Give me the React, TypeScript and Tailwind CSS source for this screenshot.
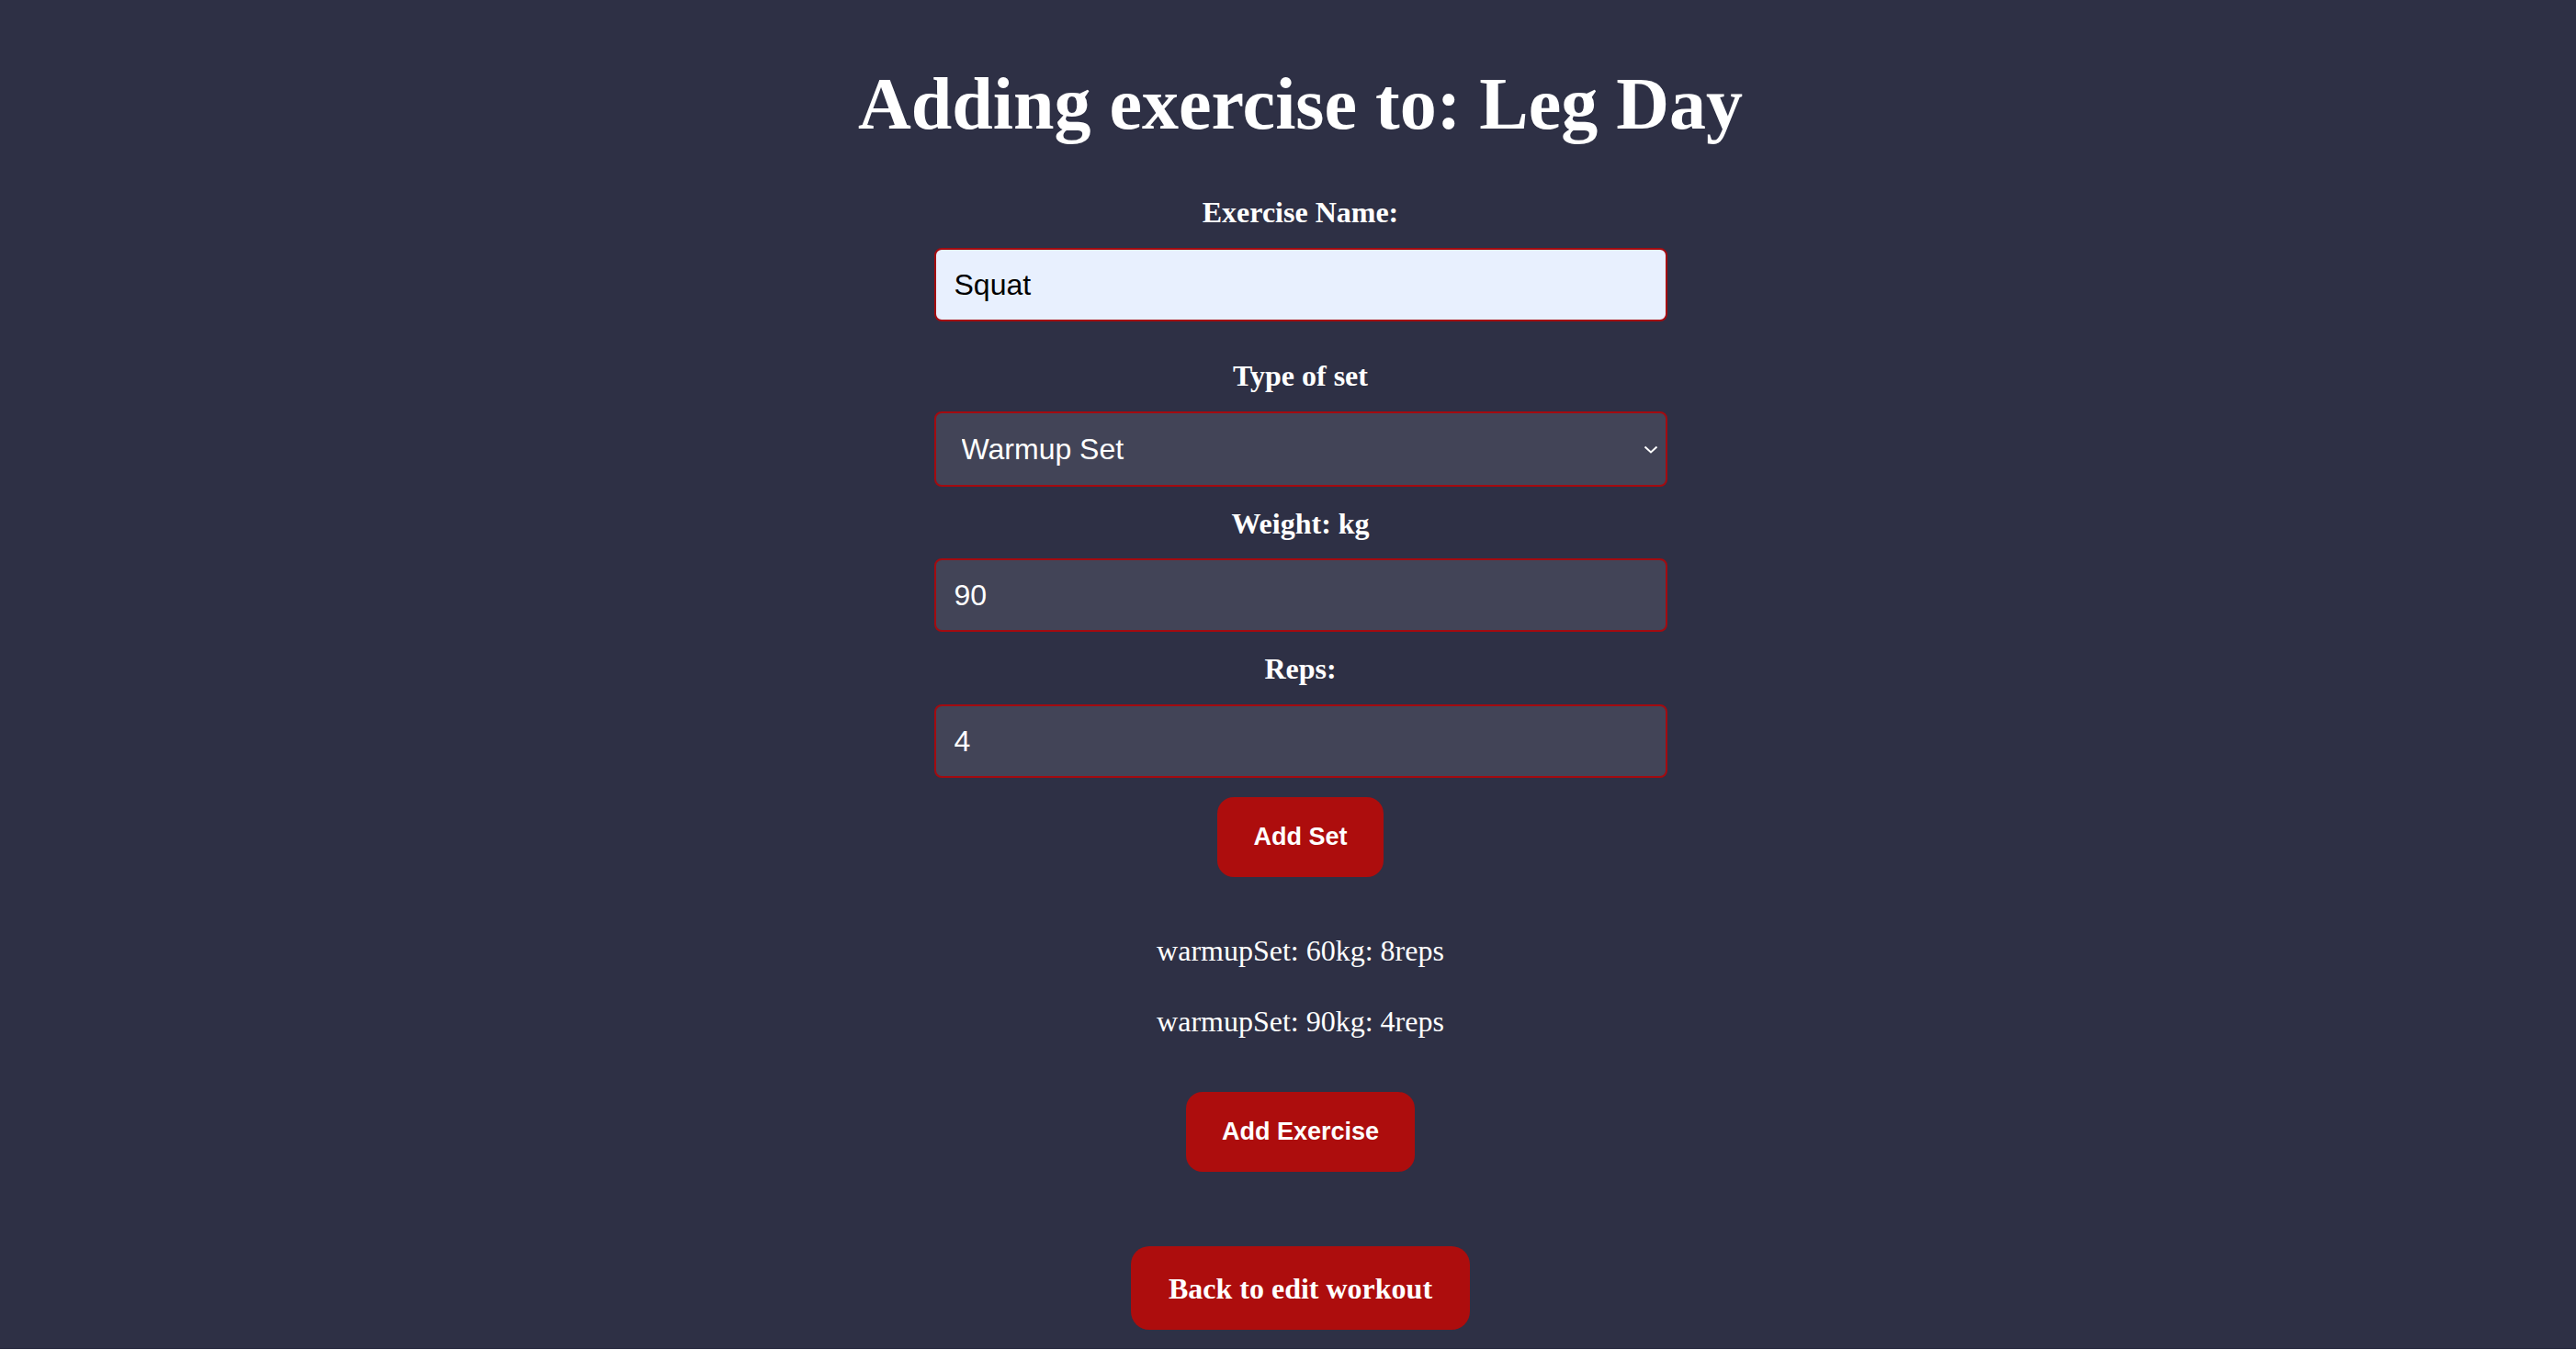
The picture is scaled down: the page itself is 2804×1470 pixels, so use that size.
import { useState } from "react";

const serif = "font-['Liberation_Serif','Times_New_Roman',serif]";
const sans = "font-['Liberation_Sans',Arial,sans-serif]";

function Label({ text, className }: { text: string; className: string }) {
  return (
    <label className={`${serif} font-bold text-[32px] leading-[32px] text-white ${className}`}>
      {text}
    </label>
  );
}

export default function App() {
  const [name, setName] = useState("Squat");
  const [setType, setSetType] = useState("warmupSet");
  const [weight, setWeight] = useState("90");
  const [reps, setReps] = useState("4");

  const sets = [
    { type: "warmupSet", weight: 60, reps: 8 },
    { type: "warmupSet", weight: 90, reps: 4 },
  ];

  return (
    <div className={`flex flex-col items-center h-[1469px] pl-[27px] bg-[#2e3045] text-white ${serif}`}>
      <h1 className="mt-[73px] text-[80px] leading-[80px] font-bold">Adding exercise to: Leg Day</h1>

      <Label text="Exercise Name:" className="mt-[62px]" />
      <input
        value={name}
        onChange={(e) => setName(e.target.value)}
        className={`mt-[23px] w-[798px] h-[80px] px-[20px] rounded-[8px] border-2 border-[#a30b10] bg-[#e8f0fe] text-black text-[32px] outline-none ${sans}`}
      />

      <Label text="Type of set" className="mt-[43px]" />
      <div className="relative mt-[23px]">
        <select
          value={setType}
          onChange={(e) => setSetType(e.target.value)}
          className={`appearance-none w-[798px] h-[82px] pl-[28px] rounded-[8px] border-2 border-[#a30b10] bg-[#424457] text-white text-[32px] outline-none ${sans}`}
        >
          <option value="warmupSet">Warmup Set</option>
          <option value="workingSet">Working Set</option>
          <option value="dropSet">Drop Set</option>
        </select>
        <svg className="absolute right-[10px] top-[37px] pointer-events-none" width="16" height="9" viewBox="0 0 16 9">
          <polyline points="1.5,1.5 8,7.5 14.5,1.5" fill="none" stroke="white" strokeWidth="2" />
        </svg>
      </div>

      <Label text="Weight: kg" className="mt-[24px]" />
      <input
        value={weight}
        onChange={(e) => setWeight(e.target.value)}
        className={`mt-[22px] w-[798px] h-[80px] px-[20px] rounded-[8px] border-2 border-[#a30b10] bg-[#424457] text-white text-[32px] outline-none ${sans}`}
      />

      <Label text="Reps:" className="mt-[24px]" />
      <input
        value={reps}
        onChange={(e) => setReps(e.target.value)}
        className={`mt-[23px] w-[798px] h-[80px] px-[20px] rounded-[8px] border-2 border-[#a30b10] bg-[#424457] text-white text-[32px] outline-none ${sans}`}
      />

      <button className={`mt-[21px] h-[87px] px-[39px] rounded-[18px] bg-[#ad0d0d] text-white text-[27px] font-bold ${sans}`}>
        Add Set
      </button>

      <div className="mt-[64px] flex flex-col items-center gap-[45px]">
        {sets.map((s, i) => (
          <p key={i} className="text-[32px] leading-[32px]">
            {s.type}: {s.weight}kg: {s.reps}reps
          </p>
        ))}
      </div>

      <button className={`mt-[61px] h-[87px] px-[39px] rounded-[18px] bg-[#ad0d0d] text-white text-[27px] font-bold ${sans}`}>
        Add Exercise
      </button>

      <button className="mt-[81px] h-[91px] px-[41px] rounded-[20px] bg-[#ad0d0d] text-white text-[32px] font-bold">
        Back to edit workout
      </button>
    </div>
  );
}
